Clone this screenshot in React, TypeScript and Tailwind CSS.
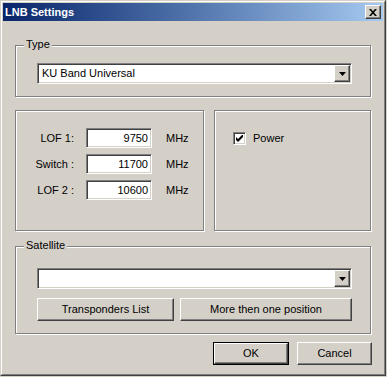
import React from "react";

const sunken =
  "border border-t-[#808080] border-l-[#808080] border-b-white border-r-white shadow-[inset_1px_1px_0_#404040,inset_-1px_-1px_0_#d4d0c8]";
const raised =
  "border border-t-white border-l-white border-b-[#404040] border-r-[#404040] shadow-[inset_-1px_-1px_0_#808080,inset_1px_1px_0_#d4d0c8]";
const etched =
  "border border-[#808080] shadow-[inset_1px_1px_0_#ffffff,1px_1px_0_#ffffff]";

function Arrow() {
  return (
    <svg width="7" height="4" viewBox="0 0 7 4">
      <path d="M0 0H7L3.5 4Z" fill="#000" />
    </svg>
  );
}

function Combo({ text, width }: { text: string; width: string }) {
  return (
    <div className={`${sunken} ${width} h-[21px] bg-white flex items-stretch p-[1px]`}>
      <div className="flex-1 flex items-center pl-[3px] leading-[13px]">{text}</div>
      <div className={`${raised} w-[16px] bg-[#d4d0c8] flex items-center justify-center`}>
        <Arrow />
      </div>
    </div>
  );
}

function Button({ label, width, def }: { label: string; width: string; def?: boolean }) {
  if (def) {
    return (
      <div className={`${width} h-[23px] border border-black flex`}>
        <div className={`${raised} flex-1 bg-[#d4d0c8] flex items-center justify-center`}>{label}</div>
      </div>
    );
  }
  return (
    <div className={`${raised} ${width} h-[23px] bg-[#d4d0c8] flex items-center justify-center`}>{label}</div>
  );
}

function Row({ label, value }: { label: string; value: string }) {
  return (
    <div className="flex items-center h-[20px]">
      <div className="w-[58px] text-right leading-[13px]">{label}</div>
      <div className={`${sunken} ml-[12px] w-[66px] h-[20px] bg-white flex items-center justify-end pr-[3px] leading-[13px]`}>
        {value}
      </div>
      <div className="ml-[14px] leading-[13px]">MHz</div>
    </div>
  );
}

export default function App() {
  return (
    <div className="w-[387px] h-[377px] bg-[#d4d0c8] font-['Liberation_Sans',Arial,sans-serif] text-[11px] text-black">
      <div className="w-[386px] h-[376px] border border-t-[#d4d0c8] border-l-[#d4d0c8] border-b-[#404040] border-r-[#404040]">
        <div className="w-full h-full border border-t-white border-l-white border-b-[#808080] border-r-[#808080] p-[1px] flex flex-col">
          {/* Title bar */}
          <div className="h-[18px] bg-linear-to-r from-[#0a246a] to-[#a6caf0] flex items-center justify-between pl-[2px] pr-[2px]">
            <span className="text-white font-bold leading-[13px]">LNB Settings</span>
            <div className={`${raised} w-[16px] h-[14px] bg-[#d4d0c8] flex items-center justify-center`}>
              <svg width="8" height="7" viewBox="0 0 8 7">
                <path d="M0 0h2l2 2.2L6 0h2L5 3.5 8 7H6L4 4.8 2 7H0l3-3.5z" fill="#000" />
              </svg>
            </div>
          </div>

          {/* Content */}
          <div className="flex flex-col pl-[12px] pt-[24px]">
            {/* Type */}
            <div className={`${etched} relative w-[356px] h-[52px] pl-[21px] pt-[17px]`}>
              <span className="absolute -top-[8px] left-[8px] px-[2px] bg-[#d4d0c8] leading-[13px]">Type</span>
              <Combo text="KU Band Universal" width="w-[315px]" />
            </div>

            <div className="flex mt-[13px] gap-[10px]">
              <div className={`${etched} w-[189px] h-[121px] pt-[17px] flex flex-col gap-[6px]`}>
                <Row label="LOF 1:" value="9750" />
                <Row label="Switch :" value="11700" />
                <Row label="LOF 2 :" value="10600" />
              </div>
              <div className={`${etched} w-[157px] h-[121px] pl-[18px] pt-[21px]`}>
                <div className="flex items-center gap-[7px]">
                  <div className={`${sunken} w-[13px] h-[13px] bg-white flex items-center justify-center`}>
                    <svg width="7" height="7" viewBox="0 0 7 7">
                      <path d="M0 2v3l2 2 5-5V-1L2 4z" fill="#000" />
                    </svg>
                  </div>
                  <span className="leading-[13px]">Power</span>
                </div>
              </div>
            </div>

            {/* Satellite */}
            <div className={`${etched} relative w-[356px] h-[88px] mt-[15px] pl-[21px] pt-[21px]`}>
              <span className="absolute -top-[8px] left-[8px] px-[2px] bg-[#d4d0c8] leading-[13px]">Satellite</span>
              <Combo text="" width="w-[315px]" />
              <div className="flex gap-[6px] mt-[9px]">
                <Button label="Transponders List" width="w-[137px]" />
                <Button label="More then one position" width="w-[172px]" />
              </div>
            </div>

            <div className="flex justify-end gap-[8px] w-[357px] mt-[8px]">
              <Button label="OK" width="w-[76px]" def />
              <Button label="Cancel" width="w-[75px]" />
            </div>
          </div>
        </div>
      </div>
    </div>
  );
}
